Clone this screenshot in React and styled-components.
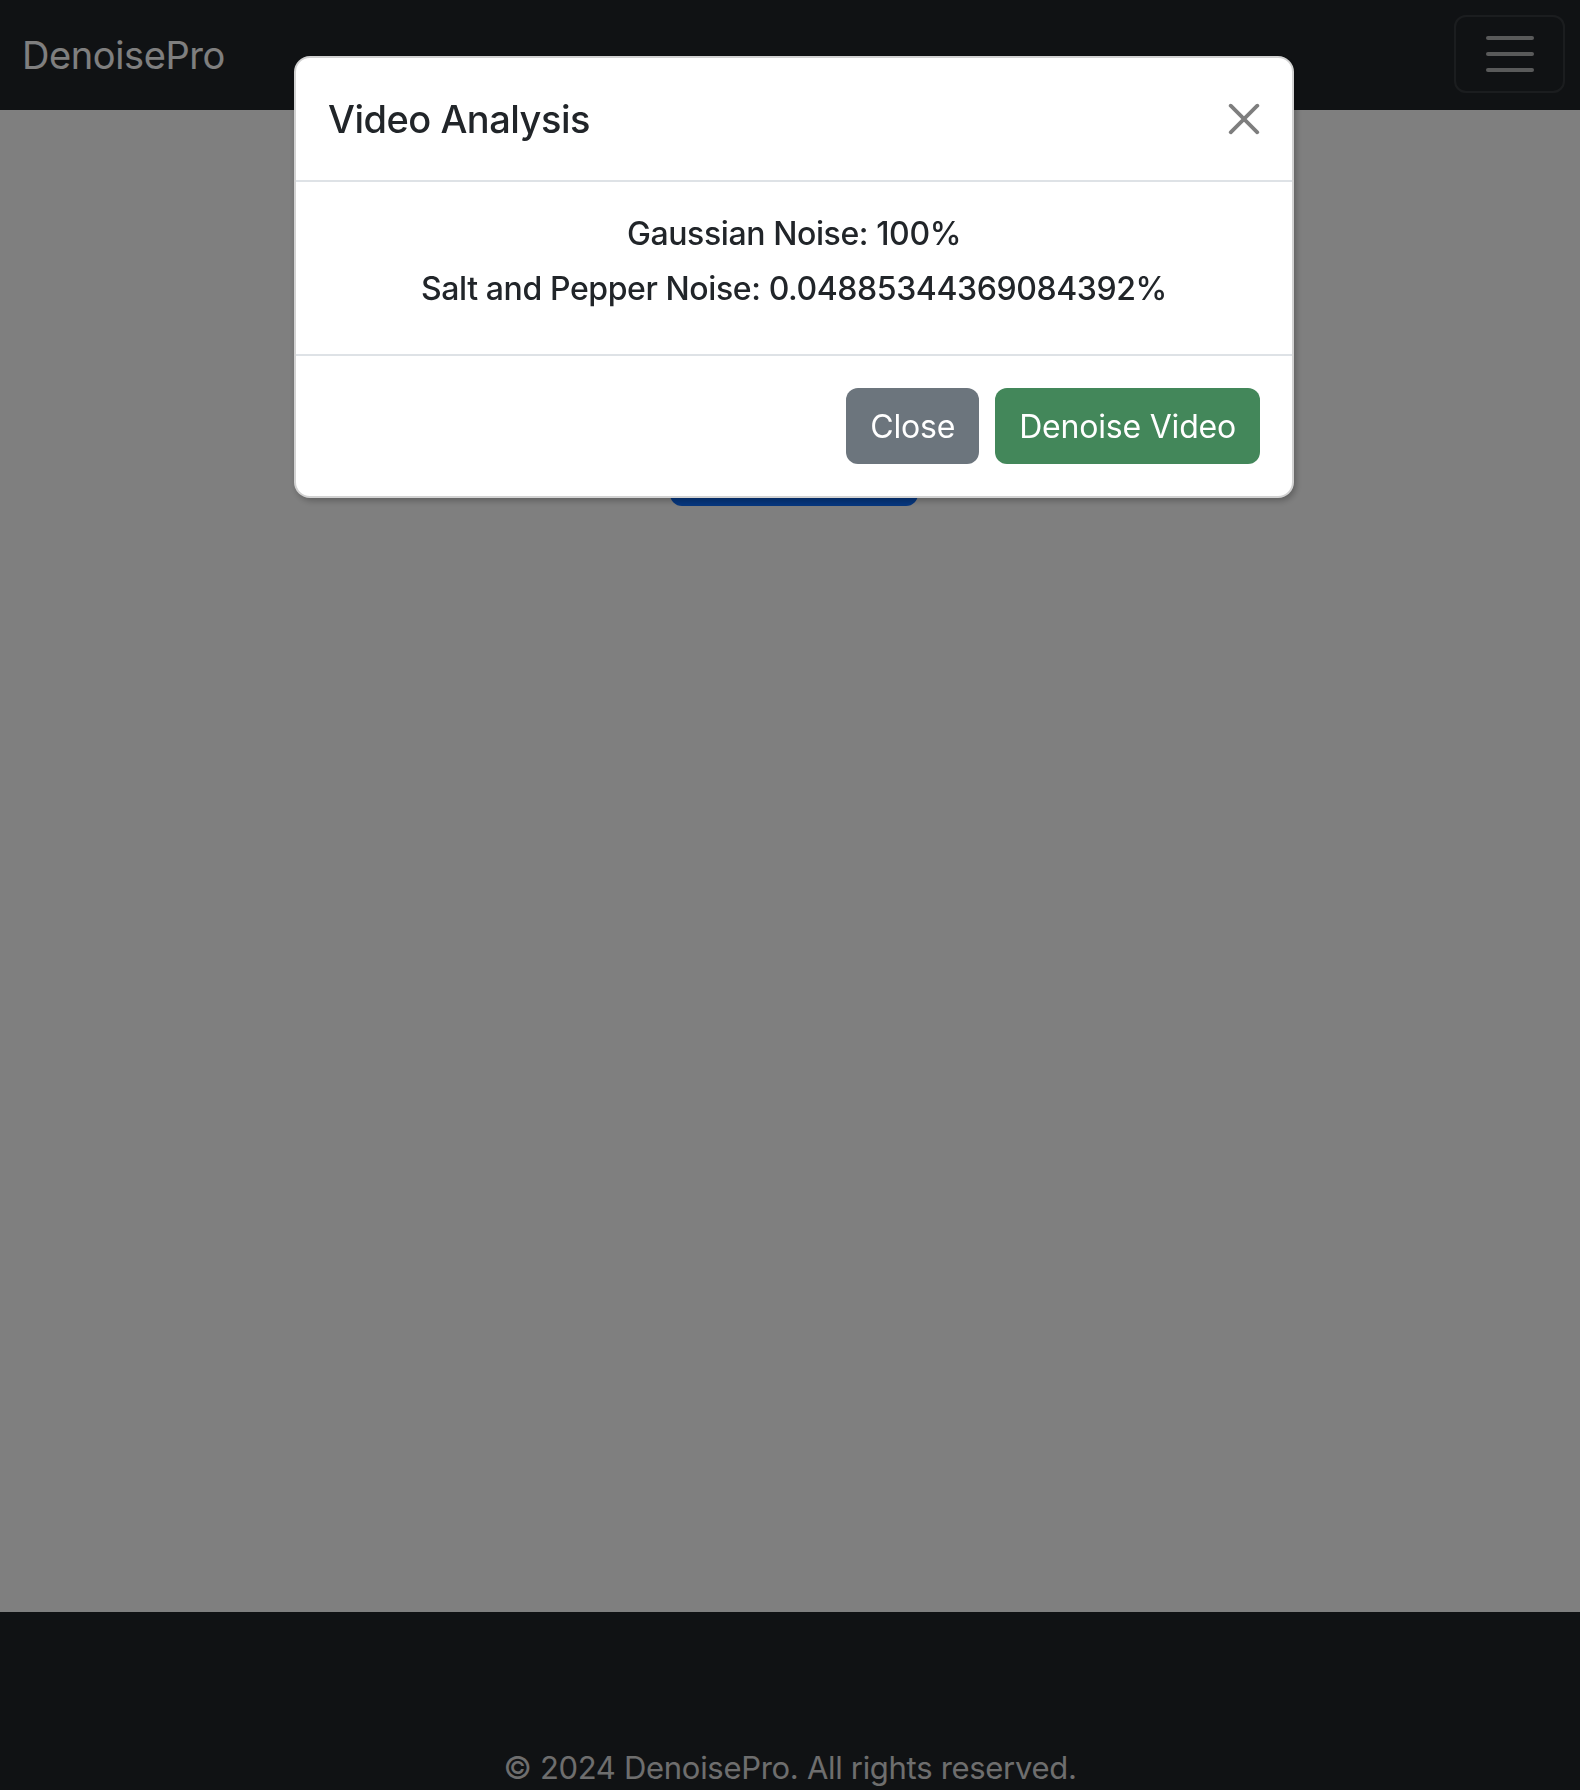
import styled, { createGlobalStyle } from 'styled-components';

const GlobalStyle = createGlobalStyle`
  *, *::before, *::after {
    box-sizing: border-box;
  }
  body {
    margin: 0;
    font-family: Inter, 'Noto Sans', 'Liberation Sans', sans-serif;
    font-size: 32px;
    line-height: 1.5;
    color: #212529;
    background: #fff;
  }
`;

const Page = styled.div`
  display: flex;
  flex-direction: column;
  min-height: 1790px;
`;

const Navbar = styled.nav`
  height: 110px;
  background: #212529;
  display: flex;
  align-items: center;
  justify-content: space-between;
  padding: 0 15px 0 22px;
`;

const Brand = styled.a`
  font-size: 38px;
  color: #fff;
  text-decoration: none;
  letter-spacing: -0.4px;
`;

const Toggler = styled.button`
  width: 111px;
  height: 78px;
  margin-top: -2px;
  border: 2px solid rgba(255, 255, 255, 0.1);
  border-radius: 12px;
  background: transparent;
  display: flex;
  flex-direction: column;
  align-items: center;
  justify-content: center;
  gap: 12px;
  padding: 0;
`;

const TogglerBar = styled.span`
  display: block;
  width: 48px;
  height: 4px;
  border-radius: 2px;
  background: #b3b4b5;
`;

const Main = styled.main`
  flex: 1;
  display: flex;
  flex-direction: column;
  align-items: center;
  padding: 320px 0 0 8px;
`;

const PrimaryButton = styled.button`
  width: 248px;
  height: 76px;
  border: none;
  border-radius: 12px;
  background: #0d6efd;
  color: #fff;
  font-family: inherit;
  font-size: 32px;
`;

const Footer = styled.footer`
  height: 178px;
  overflow: hidden;
  background: #212529;
  color: #dcdcdc;
  text-align: center;
  padding-top: 137px;
  line-height: 38px;
  font-size: 31px;
  letter-spacing: -0.3px;
`;

const Backdrop = styled.div`
  position: fixed;
  inset: 0;
  padding-left: 8px;
  background: rgba(0, 0, 0, 0.5);
`;

const Dialog = styled.div`
  width: 1000px;
  margin: 56px auto 0;
  background: #fff;
  border: 2px solid rgba(0, 0, 0, 0.175);
  border-radius: 16px;
  box-shadow: 2px 3px 6px rgba(0, 0, 0, 0.25);
  overflow: hidden;
`;

const Header = styled.div`
  display: flex;
  align-items: center;
  justify-content: space-between;
  padding: 31px 32px;
  border-bottom: 2px solid #dee2e6;
`;

const Title = styled.h5`
  margin: 0;
  font-size: 38px;
  font-weight: 500;
  line-height: 60px;
  letter-spacing: -0.5px;
`;

const CloseX = styled.button`
  width: 32px;
  height: 32px;
  padding: 0;
  border: none;
  background: transparent;
  opacity: 0.5;
  display: flex;
`;

const Body = styled.div`
  padding: 28px 32px 34px;
  text-align: center;
`;

const Line = styled.p`
  margin: 0 0 7px;
  font-size: 32px;
  font-weight: 500;
  line-height: 48px;
  letter-spacing: -0.4px;
`;

const Footerbar = styled.div`
  display: flex;
  justify-content: flex-end;
  gap: 16px;
  padding: 32px 32px;
  border-top: 2px solid #dee2e6;
`;

const ModalButton = styled.button`
  height: 76px;
  padding: 0 24px;
  border: none;
  border-radius: 12px;
  background: ${(p) => (p.$variant === 'success' ? '#43875a' : '#6c757d')};
  color: #fff;
  font-family: inherit;
  font-size: 32px;
  letter-spacing: -0.2px;
`;

function App() {
  return (
    <>
      <GlobalStyle />
      <Page>
        <Navbar>
          <Brand href="#">DenoisePro</Brand>
          <Toggler aria-label="Toggle navigation">
            <TogglerBar />
            <TogglerBar />
            <TogglerBar />
          </Toggler>
        </Navbar>
        <Main>
          <PrimaryButton>Analyze Video</PrimaryButton>
        </Main>
        <Footer>© 2024 DenoisePro. All rights reserved.</Footer>
      </Page>
      <Backdrop>
        <Dialog>
          <Header>
            <Title>Video Analysis</Title>
            <CloseX aria-label="Close">
              <svg width="32" height="32" viewBox="0 0 16 16" fill="#000">
                <path d="M.293.293a1 1 0 0 1 1.414 0L8 6.586 14.293.293a1 1 0 1 1 1.414 1.414L9.414 8l6.293 6.293a1 1 0 0 1-1.414 1.414L8 9.414l-6.293 6.293a1 1 0 0 1-1.414-1.414L6.586 8 .293 1.707a1 1 0 0 1 0-1.414z" transform="translate(8 8) scale(0.95) translate(-8 -8)" />
              </svg>
            </CloseX>
          </Header>
          <Body>
            <Line>Gaussian Noise: 100%</Line>
            <Line>Salt and Pepper Noise: 0.04885344369084392%</Line>
          </Body>
          <Footerbar>
            <ModalButton>Close</ModalButton>
            <ModalButton $variant="success">Denoise Video</ModalButton>
          </Footerbar>
        </Dialog>
      </Backdrop>
    </>
  );
}

export default App;
